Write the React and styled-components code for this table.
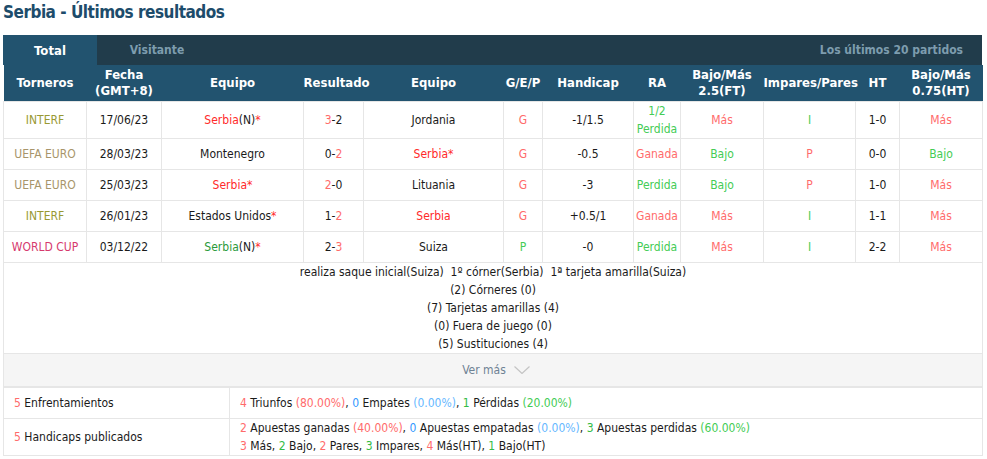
import React from "react";
import styled, { createGlobalStyle } from "styled-components";

const Global = createGlobalStyle`
  html, body { margin: 0; padding: 0; background: #fff; }
  body {
    font-family: Tahoma, "DejaVu Sans Condensed", "DejaVu Sans", sans-serif;
    font-stretch: condensed;
    font-size: 12px;
    color: #222;
  }
`;

const C = {
  red: "#ff2a2a",
  lred: "#ff6b6b",
  green: "#33bb44",
  lgreen: "#44cc55",
  dgreen: "#2a9a3a",
  olive: "#999933",
  brown: "#a8956a",
  pink: "#d63a6e",
  blue: "#3399ff",
  lblue: "#66b8ff",
};

const Page = styled.div`
  padding: 0 5px 0 3px;
  width: 979px;
`;

const Title = styled.h2`
  margin: 0 0 11px 0;
  height: 24px;
  line-height: 24px;
  font-size: 17px;
  letter-spacing: -0.5px;
  font-weight: bold;
  color: #1d4c6b;
`;

const TabBar = styled.div`
  display: flex;
  align-items: stretch;
  height: 30px;
  background: #213c4b;
`;

const Tab = styled.div`
  width: ${(p) => p.$w}px;
  display: flex;
  align-items: center;
  justify-content: center;
  font-weight: bold;
  font-size: ${(p) => (p.$active ? 13 : 12)}px;
  color: ${(p) => (p.$active ? "#fff" : "#7d9cae")};
  background: ${(p) => (p.$active ? "#22536f" : "transparent")};
`;

const TabNote = styled.div`
  margin-left: auto;
  padding-right: 19px;
  display: flex;
  align-items: center;
  font-weight: bold;
  font-size: 12px;
  color: #7d9cae;
`;

const Table = styled.table`
  width: 979px;
  border-collapse: collapse;
  table-layout: fixed;
`;

const Th = styled.th`
  background: #22536f;
  color: #fff;
  font-weight: bold;
  font-size: 13px;
  line-height: 16px;
  height: 36px;
  padding: 0;
  text-align: center;
`;

const Td = styled.td`
  border: 1px solid #e6e6e6;
  height: 30px;
  padding: 0;
  text-align: center;
  line-height: 18px;
  color: ${(p) => p.$c || "#1a1a1a"};
`;

const Span = styled.span`
  color: ${(p) => p.$c};
`;

const DetailCell = styled.td`
  border: 1px solid #e6e6e6;
  padding: 0;
  text-align: center;
  line-height: 18px;
  color: #1a1a1a;
`;

const MoreCell = styled.td`
  border: 1px solid #e6e6e6;
  background: #f5f5f5;
  height: 32px;
  padding: 0;
  text-align: center;
  color: #6f8294;
`;

const MoreInner = styled.span`
  display: inline-flex;
  align-items: center;
  gap: 8px;
  padding-left: 6px;
`;

const SumTable = styled.table`
  width: 979px;
  border-collapse: collapse;
  table-layout: fixed;
`;

const SumTd = styled.td`
  border: 1px solid #e6e6e6;
  height: 30px;
  padding: 0 0 0 10px;
  line-height: 18px;
  color: #1a1a1a;
`;

const widths = [83, 75, 142, 60, 140, 39, 91, 47, 83, 92, 44, 83];

const rows = [
  {
    l: ["INTERF", C.olive],
    d: "17/06/23",
    h: [<Span $c={C.red}>Serbia</Span>, "(N)", <Span $c={C.red}>*</Span>],
    r: [<Span $c={C.lred}>3</Span>, "-2"],
    a: ["Jordania"],
    g: ["G", C.lred],
    hc: "-1/1.5",
    ra: [<>1/2<br />Perdida</>, C.lgreen],
    ou: ["Más", C.lred],
    op: ["I", C.lgreen],
    ht: "1-0",
    ou2: ["Más", C.lred],
  },
  {
    l: ["UEFA EURO", C.brown],
    d: "28/03/23",
    h: ["Montenegro"],
    r: ["0-", <Span $c={C.lred}>2</Span>],
    a: [<Span $c={C.red}>Serbia*</Span>],
    g: ["G", C.lred],
    hc: "-0.5",
    ra: ["Ganada", C.lred],
    ou: ["Bajo", C.lgreen],
    op: ["P", C.lred],
    ht: "0-0",
    ou2: ["Bajo", C.lgreen],
  },
  {
    l: ["UEFA EURO", C.brown],
    d: "25/03/23",
    h: [<Span $c={C.red}>Serbia*</Span>],
    r: [<Span $c={C.lred}>2</Span>, "-0"],
    a: ["Lituania"],
    g: ["G", C.lred],
    hc: "-3",
    ra: ["Perdida", C.lgreen],
    ou: ["Bajo", C.lgreen],
    op: ["P", C.lred],
    ht: "1-0",
    ou2: ["Más", C.lred],
  },
  {
    l: ["INTERF", C.olive],
    d: "26/01/23",
    h: ["Estados Unidos", <Span $c={C.red}>*</Span>],
    r: ["1-", <Span $c={C.lred}>2</Span>],
    a: [<Span $c={C.red}>Serbia</Span>],
    g: ["G", C.lred],
    hc: "+0.5/1",
    ra: ["Ganada", C.lred],
    ou: ["Más", C.lred],
    op: ["I", C.lgreen],
    ht: "1-1",
    ou2: ["Más", C.lred],
  },
  {
    l: ["WORLD CUP", C.pink],
    d: "03/12/22",
    h: [<Span $c={C.dgreen}>Serbia</Span>, "(N)", <Span $c={C.red}>*</Span>],
    r: ["2-", <Span $c={C.lred}>3</Span>],
    a: ["Suiza"],
    g: ["P", C.lgreen],
    hc: "-0",
    ra: ["Perdida", C.lgreen],
    ou: ["Más", C.lred],
    op: ["I", C.lgreen],
    ht: "2-2",
    ou2: ["Más", C.lred],
  },
];

const Chevron = () => (
  <svg width="16" height="8" viewBox="0 0 16 8" fill="none">
    <path d="M0.5 0.5 L8 7.5 L15.5 0.5" stroke="#c4c4c4" strokeWidth="1.2" />
  </svg>
);

const frag = (arr) => arr.map((x, i) => <React.Fragment key={i}>{x}</React.Fragment>);

export default function App() {
  return (
    <>
      <Global />
      <Page>
        <Title>Serbia - Últimos resultados</Title>
        <TabBar>
          <Tab $w={94} $active>Total</Tab>
          <Tab $w={120}>Visitante</Tab>
          <TabNote>Los últimos 20 partidos</TabNote>
        </TabBar>
        <Table>
          <colgroup>
            {widths.map((w, i) => (
              <col key={i} style={{ width: w }} />
            ))}
          </colgroup>
          <thead>
            <tr>
              <Th>Torneros</Th>
              <Th>Fecha<br />(GMT+8)</Th>
              <Th>Equipo</Th>
              <Th>Resultado</Th>
              <Th>Equipo</Th>
              <Th>G/E/P</Th>
              <Th>Handicap</Th>
              <Th>RA</Th>
              <Th>Bajo/Más<br />2.5(FT)</Th>
              <Th>Impares/Pares</Th>
              <Th>HT</Th>
              <Th>Bajo/Más<br />0.75(HT)</Th>
            </tr>
          </thead>
          <tbody>
            {rows.map((r, i) => (
              <tr key={i}>
                <Td $c={r.l[1]}>{r.l[0]}</Td>
                <Td>{r.d}</Td>
                <Td>{frag(r.h)}</Td>
                <Td>{frag(r.r)}</Td>
                <Td>{frag(r.a)}</Td>
                <Td $c={r.g[1]}>{r.g[0]}</Td>
                <Td>{r.hc}</Td>
                <Td $c={r.ra[1]}>{r.ra[0]}</Td>
                <Td $c={r.ou[1]}>{r.ou[0]}</Td>
                <Td $c={r.op[1]}>{r.op[0]}</Td>
                <Td>{r.ht}</Td>
                <Td $c={r.ou2[1]}>{r.ou2[0]}</Td>
              </tr>
            ))}
            <tr>
              <DetailCell colSpan={12}>
                realiza saque inicial(Suiza)&nbsp;&nbsp;1º córner(Serbia)&nbsp;&nbsp;1ª tarjeta amarilla(Suiza)
                <br />(2) Córneres (0)
                <br />(7) Tarjetas amarillas (4)
                <br />(0) Fuera de juego (0)
                <br />(5) Sustituciones (4)
              </DetailCell>
            </tr>
            <tr>
              <MoreCell colSpan={12}>
                <MoreInner>
                  Ver más <Chevron />
                </MoreInner>
              </MoreCell>
            </tr>
          </tbody>
        </Table>
        <SumTable>
          <colgroup>
            <col style={{ width: 226 }} />
            <col style={{ width: 753 }} />
          </colgroup>
          <tbody>
            <tr>
              <SumTd>
                <Span $c={C.lred}>5</Span> Enfrentamientos
              </SumTd>
              <SumTd>
                <Span $c={C.lred}>4</Span> Triunfos <Span $c={C.lred}>(80.00%)</Span>,{" "}
                <Span $c={C.blue}>0</Span> Empates <Span $c={C.lblue}>(0.00%)</Span>,{" "}
                <Span $c={C.green}>1</Span> Pérdidas <Span $c={C.lgreen}>(20.00%)</Span>
              </SumTd>
            </tr>
            <tr>
              <SumTd>
                <Span $c={C.lred}>5</Span> Handicaps publicados
              </SumTd>
              <SumTd>
                <Span $c={C.lred}>2</Span> Apuestas ganadas <Span $c={C.lred}>(40.00%)</Span>,{" "}
                <Span $c={C.blue}>0</Span> Apuestas empatadas <Span $c={C.lblue}>(0.00%)</Span>,{" "}
                <Span $c={C.green}>3</Span> Apuestas perdidas <Span $c={C.lgreen}>(60.00%)</Span>
                <br />
                <Span $c={C.lred}>3</Span> Más, <Span $c={C.green}>2</Span> Bajo,{" "}
                <Span $c={C.lred}>2</Span> Pares, <Span $c={C.green}>3</Span> Impares,{" "}
                <Span $c={C.lred}>4</Span> Más(HT), <Span $c={C.green}>1</Span> Bajo(HT)
              </SumTd>
            </tr>
          </tbody>
        </SumTable>
      </Page>
    </>
  );
}
